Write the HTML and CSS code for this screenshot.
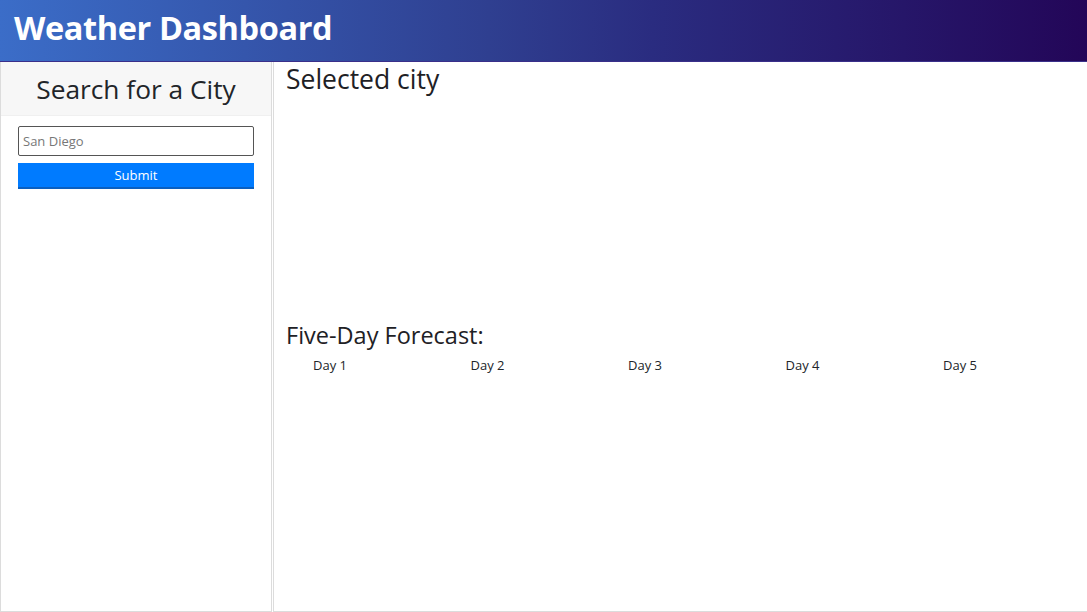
FILE: index.html
```html
<!DOCTYPE html>
<html lang="en">
<head>
<meta charset="utf-8">
<title>Weather Dashboard</title>
<link rel="stylesheet" href="styles.css">
</head>
<body>
<header class="topbar">
  <h1 class="brand">Weather Dashboard</h1>
</header>
<div class="layout">
  <aside class="sidebar">
    <div class="sidebar-head">Search for a City</div>
    <form class="search">
      <input class="search-input" type="text" placeholder="San Diego">
      <button class="search-btn" type="button">Submit</button>
    </form>
  </aside>
  <main class="main">
    <h2 class="section-title city-title">Selected city</h2>
    <div class="current"></div>
    <h2 class="section-title forecast-title">Five-Day Forecast:</h2>
    <div class="days">
      <div class="day">Day 1</div>
      <div class="day">Day 2</div>
      <div class="day">Day 3</div>
      <div class="day">Day 4</div>
      <div class="day">Day 5</div>
    </div>
  </main>
</div>
</body>
</html>
```
FILE: styles.css
```css
* { box-sizing: border-box; }
html, body { height: 100%; }
body {
  margin: 0;
  font-family: "Open Sans", "Noto Sans", sans-serif;
  color: #212529;
  background: #fff;
  display: flex;
  flex-direction: column;
}
.topbar {
  height: 62px;
  flex: none;
  background: linear-gradient(to right, #3b6dc8 0%, #2f3f90 45%, #2a2c80 60%, #230658 100%);
  border-bottom: 1px solid #3a2f8a;
  display: flex;
  align-items: center;
  padding-left: 14px;
}
.brand {
  margin: 0;
  color: #fff;
  font-size: 32.5px;
  font-weight: 700;
  letter-spacing: -0.4px;
  line-height: 1;
  padding-bottom: 4px;
}
.layout {
  flex: 1;
  display: flex;
  gap: 1px;
  min-height: 0;
}
.sidebar {
  width: 272px;
  flex: none;
  border: 1px solid #dcdcdc;
  border-top: none;
}
.sidebar-head {
  background: #f7f7f7;
  height: 54px;
  display: flex;
  align-items: center;
  justify-content: center;
  font-size: 26.3px;
  font-weight: 500;
  border-bottom: 1px solid #f0f0f0;
}
.search {
  padding: 10px 17px 0 17px;
  display: flex;
  flex-direction: column;
  gap: 7px;
}
.search-input {
  height: 30px;
  border: 1px solid #555;
  border-radius: 2px;
  padding: 0 4px;
  font-family: inherit;
  font-size: 13px;
}
.search-input::placeholder { color: #777; }
.search-btn {
  height: 26px;
  background: #007bff;
  color: #fff;
  border: none;
  border-bottom: 2px solid #0a5fc0;
  font-family: inherit;
  font-size: 13px;
  padding: 0;
}
.main {
  flex: 1;
  border: 1px solid #dcdcdc;
  border-top: none;
  border-right: none;
  padding: 0 12px;
}
.section-title {
  margin: 0;
  font-weight: 500;
  line-height: 34px;
  color: #1e2125;
}
.city-title {
  font-size: 26.5px;
}
.current { height: 222px; }
.forecast-title {
  font-size: 23.5px;
}
.days {
  display: grid;
  grid-template-columns: repeat(5, 157.5px);
  margin-top: 4px;
}
.day {
  padding-left: 27px;
  font-size: 13px;
  line-height: 18px;
}
```
